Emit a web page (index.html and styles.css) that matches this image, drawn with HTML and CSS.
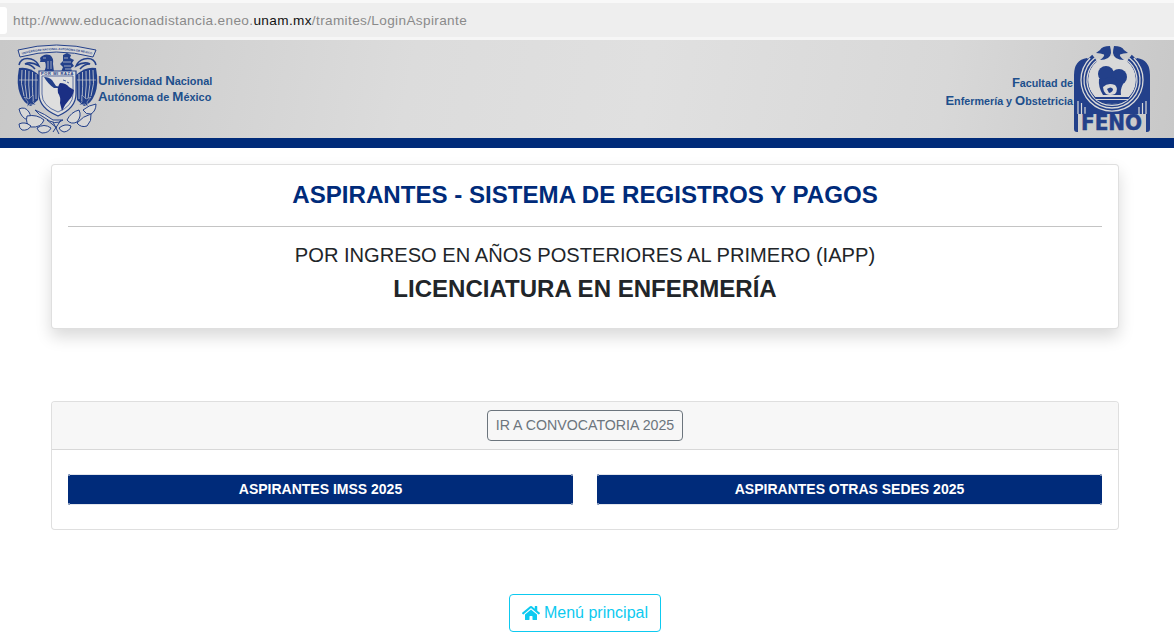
FILE: index.html
```html
<!DOCTYPE html>
<html lang="es">
<head>
<meta charset="utf-8">
<title>Login Aspirante</title>
<link rel="stylesheet" href="styles.css">
</head>
<body>
<div class="urlbar">
  <span class="tabstub"></span>
  <span class="url">http://www.educacionadistancia.eneo.<b>unam.mx</b>/tramites/LoginAspirante</span>
</div>
<header class="banner">
  <div class="brand">
    <svg class="unam" viewBox="0 0 81 90" aria-hidden="true">
      <defs><path id="scrollarc" d="M3 11 Q39 1 77 11"/></defs>
      <!-- scroll -->
      <path d="M1 6 Q39 -4 79 6 L76 13 Q39 3 3 13Z" fill="#d6d6d6" stroke="#23408a" stroke-width="1"/>
      <text class="seal-scroll"><textPath href="#scrollarc" startOffset="50%" text-anchor="middle">UNIVERSIDAD NACIONAL AUTONOMA DE MEXICO</textPath></text>
      <!-- wing tops -->
      <g fill="none" stroke="#23408a" stroke-width="1.500">
        <path d="M2 21 Q4 13 14 15 Q20 17 22 22 Q14 17 8 20 Q14 20 18 25"/>
        <path d="M79 21 Q77 13 67 15 Q61 17 59 22 Q67 17 73 20 Q67 20 63 25"/>
      </g>
      <!-- wings -->
      <path d="M2 24 Q-1 40 3 50 Q7 60 14 62 L21 56 L22 31 Q12 22 2 24Z" fill="#23408a"/>
      <path d="M79 24 Q82 40 78 50 Q74 60 67 62 L60 56 L59 31 Q69 22 79 24Z" fill="#23408a"/>
      <g fill="none" stroke="#d4d4d4" stroke-width=".8">
        <path d="M5 26 Q3 40 7 52 M8.500 26 Q7 40 10 55 M12 27 Q11 40 13 57 M15.500 28 Q15 42 16 57 M19 30 V55"/>
        <path d="M76 26 Q78 40 74 52 M72.500 26 Q74 40 71 55 M69 27 Q70 40 68 57 M65.500 28 Q66 42 65 57 M62 30 V55"/>
        <path d="M2 36 H21 M60 36 H79" stroke-width=".6"/>
      </g>
      <!-- talons -->
      <path d="M7 53 L12 55 L16 51 L16 58 L19 61 L13 60 L10 63 L11 58Z" fill="#23408a" stroke="#d4d4d4" stroke-width=".5"/>
      <path d="M74 53 L69 55 L65 51 L65 58 L62 61 L68 60 L71 63 L70 58Z" fill="#23408a" stroke="#d4d4d4" stroke-width=".5"/>
      <!-- eagle and condor -->
      <path d="M23 14 Q27 9 33 11 Q37 14 36 20 L37 28 L27 28 Q30 22 28 18 L23 18 Q24 16 23 14Z" fill="#23408a"/>
      <path d="M26 14 h3 M31 17 v8 M34 17 v8" stroke="#d4d4d4" stroke-width=".7" fill="none"/>
      <path d="M46 11 L50 9 L54 11 L53 14 L57 16 L55 19 L57 22 L54 24 L55 28 L44 28 L46 23 L43 20 L46 17Z" fill="#23408a"/>
      <path d="M47 14 h4 M46 18 h8 M47 22 h7 M48 25 h6" stroke="#d4d4d4" stroke-width=".7" fill="none"/>
      <!-- shield -->
      <path d="M22 27 H59 V50 Q59 64 41 72 Q22 64 22 50Z" fill="#dcdcdc" stroke="#23408a" stroke-width="1.200"/>
      <path d="M25 32 H56 V50 Q56 62 41 68 Q25 62 25 50Z" fill="#dedede" stroke="#23408a" stroke-width=".7"/>
      <text class="seal-motto" x="40.500" y="31">POR MI RAZA</text>
      <path d="M27 33 Q32 33 35 36 L39 42 L44 43 L42 44 L37 44 Q31 40 27 33Z" fill="#23408a"/>
      <path d="M43 39 Q49 39 52 43 L57 46 Q56 52 52 56 Q48 60 45 67 L43 59 Q44 53 41 49 Q40 43 43 39Z" fill="#1b2f84"/>
      <path d="M46 36 l3 1 M50 38 l2 1" stroke="#23408a" stroke-width=".8"/>
      <!-- cactus -->
      <g fill="#d8d8d8" stroke="#23408a" stroke-width="1">
        <path d="M2 65 Q8 62 12 68 Q15 73 11 76 Q4 74 2 65Z"/>
        <path d="M10 72 Q20 70 27 76 Q24 84 14 83 Q8 80 10 72Z"/>
        <path d="M2 80 Q8 77 14 82 Q11 87 5 86 Q2 84 2 80Z"/>
        <path d="M20 84 Q27 79 34 84 Q32 89 25 89 Q21 88 20 84Z"/>
        <path d="M42 84 Q48 79 54 82 Q53 87 47 88 Q43 87 42 84Z"/>
        <path d="M50 76 Q54 68 62 66 Q65 72 60 78 Q54 81 50 76Z"/>
        <path d="M60 79 Q66 72 74 70 Q75 77 70 82 Q64 84 60 79Z"/>
        <path d="M66 66 Q72 61 79 60 Q79 67 74 70 Q69 71 66 66Z"/>
        <path d="M18 66 Q28 70 36 76 L46 76 Q38 82 28 74 Q22 71 18 66Z"/>
      </g>
      <path d="M36 78 L42 90 M44 76 L36 88 M30 76 L40 84" stroke="#23408a" stroke-width="1" fill="none"/>
    </svg>
    <p class="unam-name"><span>U</span>niversidad <span>N</span>acional<br><span>A</span>utónoma de <span>M</span>éxico</p>
  </div>
  <div class="brand">
    <p class="feno-name"><span>F</span>acultad de<br><span>E</span>nfermería y <span>O</span>bstetricia</p>
    <svg class="feno" viewBox="0 0 76 88" aria-hidden="true">
      <!-- body silhouette: shoulders and lower corners -->
      <path d="M13 13 Q0 15 0 30 V84 Q0 87 3 87 H4 V69 H72 V87 H73 Q76 87 76 84 V30 Q76 15 63 13 L38 40Z" fill="#23408a"/>
      <!-- inner field -->
      <circle cx="38" cy="35" r="24" fill="#d9d9d9"/>
      <!-- concentric rings, open at the top -->
      <g fill="none">
        <path d="M20.700 13 A28 28 0 1 0 55.300 13" stroke="#23408a" stroke-width="8"/>
        <path d="M16.200 13 A31 31 0 1 0 59.800 13" stroke="#d9d9d9" stroke-width="1.300"/>
        <path d="M20.700 13 A28 28 0 1 0 55.300 13" stroke="#d9d9d9" stroke-width="1.300"/>
        <path d="M25 14 A25 25 0 1 0 51 14" stroke="#d9d9d9" stroke-width="1.300"/>
      </g>
      <!-- bird heads -->
      <path d="M36 1 Q28 1 26 5 L22 8 Q27 8 30 9.500 Q31 11 26 15 Q36 15 37 8 Q37 5 36 1Z" fill="#23408a"/>
      <path d="M40 1 Q48 1 50 5 L54 8 Q49 8 46 9.500 Q45 11 50 15 Q40 15 39 8 Q39 5 40 1Z" fill="#23408a"/>
      <!-- figure -->
      <circle cx="32" cy="29" r="8" fill="#23408a"/>
      <circle cx="45" cy="32" r="8" fill="#23408a"/>
      <path d="M25 34 Q24 42 29 50 H47 Q46 45 49 39 L40 32Z" fill="#23408a"/>
      <path d="M29 42 Q34 37 41 40 Q45 44 41 49 Q36 51 32 49 Q29 46 29 42Z" fill="#d9d9d9"/>
      <path d="M33 44 Q37 41 39 44 Q39 47 35 48Z" fill="#23408a"/>
      <!-- bowl -->
      <path d="M20 52 H56 Q53 58 38 59 Q23 58 20 52Z" fill="#23408a"/>
      <path d="M22 54.500 H54" stroke="#d9d9d9" stroke-width="1"/>
      <!-- vertical stripes -->
      <path d="M4 56 V69 M7.500 58 V69 M11 62 V69 M65 62 V69 M68.500 58 V69 M72 56 V69" stroke="#d9d9d9" stroke-width="1.200"/>
      <text class="feno-word" x="7" y="85" textLength="61" lengthAdjust="spacingAndGlyphs">FENO</text>
    </svg>
  </div>
</header>
<div class="band"></div>
<main class="page">
  <section class="card title-card">
    <h1>ASPIRANTES - SISTEMA DE REGISTROS Y PAGOS</h1>
    <hr>
    <p class="sub">POR INGRESO EN AÑOS POSTERIORES AL PRIMERO (IAPP)</p>
    <h2>LICENCIATURA EN ENFERMERÍA</h2>
  </section>
  <section class="card panel">
    <div class="panel-head"><a class="btn-outline">IR A CONVOCATORIA 2025</a></div>
    <div class="panel-body">
      <a class="btn-blue">ASPIRANTES IMSS 2025</a>
      <a class="btn-blue">ASPIRANTES OTRAS SEDES 2025</a>
    </div>
  </section>
  <div class="menu-row">
    <a class="btn-menu">
      <svg class="home" viewBox="0 0 576 512" aria-hidden="true"><path fill="currentColor" d="M280.400 148.300L96 300.100V464a16 16 0 0 0 16 16l112.100-.3a16 16 0 0 0 15.900-16V368a16 16 0 0 1 16-16h64a16 16 0 0 1 16 16v95.600a16 16 0 0 0 16 16.100L464 480a16 16 0 0 0 16-16V300L295.700 148.300a12.200 12.200 0 0 0-15.300 0zM571.600 251.500L488 182.600V44.100a12 12 0 0 0-12-12h-56a12 12 0 0 0-12 12v72.600L318.500 43a48 48 0 0 0-61 0L4.300 251.500a12 12 0 0 0-1.600 16.900l25.500 31A12 12 0 0 0 45.200 301l235.200-193.700a12.200 12.200 0 0 1 15.300 0L530.900 301a12 12 0 0 0 16.900-1.600l25.500-31a12 12 0 0 0-1.700-16.900z"/></svg>
      Menú principal
    </a>
  </div>
</main>
</body>
</html>
```
FILE: styles.css
```css
* { box-sizing: border-box; }
html, body { margin: 0; padding: 0; height: 641px; overflow: hidden; background: #fff; }
body { font-family: "Liberation Sans", Arial, sans-serif; color: #212529; }

.urlbar {
  height: 40px;
  display: flex;
  align-items: center;
  gap: 6px;
  background: #eeeeee;
  border-top: 3px solid #f8f8f8;
  border-bottom: 3px solid #f6f6f6;
}
.tabstub { width: 7px; height: 27px; background: #fff; border-radius: 0 3px 3px 0; }
.url { font-size: 13.600px; letter-spacing: 0.36px; color: #8a8a8a; }
.url b { font-weight: 400; color: #111; }

.banner {
  height: 98px;
  display: flex;
  justify-content: space-between;
  align-items: flex-start;
  padding: 4px 24px 0 17px;
  background: linear-gradient(100deg, #c8c8c8 0%, #dcdcdc 35%, #e0e0e0 55%, #d8d8d8 80%, #c8c8c8 100%);
}
.brand { display: flex; align-items: center; }
.unam { width: 81px; height: 90px; overflow: visible; }
.unam-name {
  margin: 0;
  font-size: 10.900px;
  line-height: 16px;
  font-weight: 700;
  color: #1d4f8c;
  white-space: nowrap;
}
.unam-name span { font-size: 13.300px; }
.feno-name {
  margin: 6px 1px 0 0;
  font-size: 10.750px;
  line-height: 17px;
  font-weight: 700;
  color: #1d4f8c;
  text-align: right;
  white-space: nowrap;
}
.feno-name span { font-size: 13px; }
.feno { width: 76px; height: 88px; margin-top: 1px; overflow: visible; }
.seal-scroll { font: 700 2.900px "Liberation Sans", sans-serif; fill: #23408a; }
.seal-motto { font: 700 4px "Liberation Sans", sans-serif; fill: #23408a; text-anchor: middle; letter-spacing: .6px; }
.feno-word { font: 700 22px "DejaVu Sans", sans-serif; fill: #23408a; stroke: #23408a; stroke-width: .5px; }

.band { height: 10px; background: #002b7a; }

.page { width: 1068px; margin: 16px 0 0 51px; }

.card { background: #fff; border: 1px solid rgba(0,0,0,.125); border-radius: 4px; }

.title-card {
  height: 165px;
  padding: 16px;
  text-align: center;
  box-shadow: 0 8px 16px rgba(0,0,0,.15);
}
h1 { margin: 0; font-size: 24.100px; line-height: 27px; font-weight: 700; color: #002b7a; }
hr { margin: 18px 0 0; border: 0; border-top: 1px solid #c4c4c4; }
.sub { margin: 14px 0 0; font-size: 20.130px; line-height: 28px; }
h2 { margin: 5px 0 0; font-size: 24.050px; line-height: 29px; font-weight: 700; }

.panel { height: 129px; margin-top: 72px; }
.panel-head {
  height: 48px;
  display: flex;
  justify-content: center;
  align-items: center;
  background: #f7f7f7;
  border-bottom: 1px solid rgba(0,0,0,.125);
  border-radius: 3px 3px 0 0;
}
.btn-outline {
  height: 31px;
  padding: 0 8px 2px;
  display: flex;
  align-items: center;
  font-size: 14.200px;
  color: #6c757d;
  border: 1px solid #6c757d;
  border-radius: 4px;
}
.panel-body {
  display: grid;
  grid-template-columns: 1fr 1fr;
  gap: 24px;
  padding: 24px 16px;
}
.btn-blue {
  height: 31px;
  padding-bottom: 2px;
  display: flex;
  justify-content: center;
  align-items: center;
  background:
    linear-gradient(#7f93b8, #7f93b8) left top / 2px 2px no-repeat,
    linear-gradient(#7f93b8, #7f93b8) right top / 2px 2px no-repeat,
    linear-gradient(#7f93b8, #7f93b8) left bottom / 2px 2px no-repeat,
    linear-gradient(#7f93b8, #7f93b8) right bottom / 2px 2px no-repeat,
    linear-gradient(#e3e6ec, #e3e6ec) top / 100% 1px no-repeat,
    linear-gradient(#e3e6ec, #e3e6ec) bottom / 100% 1px no-repeat,
    #002b7a;
  border-radius: 1px;
  font-size: 14px;
  font-weight: 700;
  color: #fff;
}

.menu-row { display: flex; justify-content: center; margin-top: 64px; }
.btn-menu {
  height: 38px;
  padding: 0 12px;
  display: flex;
  align-items: center;
  gap: 4px;
  font-size: 16px;
  color: #0dcaf0;
  border: 1px solid #0dcaf0;
  border-radius: 4px;
}
.home { width: 18px; height: 16px; }
```
